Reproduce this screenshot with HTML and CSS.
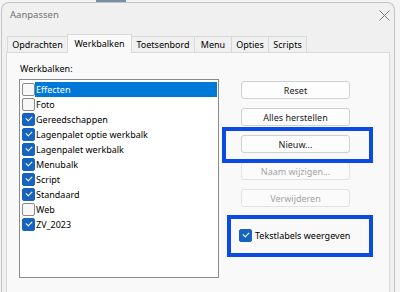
FILE: index.html
```html
<!DOCTYPE html>
<html>
<head>
    <meta charset="UTF-8">
    <title>Aanpassen</title>
    <link rel="stylesheet" href="styles.css">
</head>
<body>
    <div class="strip"><span class="peek"></span></div>
    <div class="dialog">
        <div class="titlebar">
            <span class="title">Aanpassen</span>
            <svg class="close" width="11" height="11" viewBox="0 0 11 11">
                <path d="M0.5 0.5 L10.5 10.5 M10.5 0.5 L0.5 10.5" stroke="#7c7c7c" stroke-width="1" fill="none"/>
            </svg>
        </div>
        <div class="tabs">
            <div class="tab w1">Opdrachten</div>
            <div class="tab w2 active">Werkbalken</div>
            <div class="tab w3">Toetsenbord</div>
            <div class="tab w4">Menu</div>
            <div class="tab w5">Opties</div>
            <div class="tab w6">Scripts</div>
        </div>
        <div class="panel">
            <div class="left">
                <div class="caption">Werkbalken:</div>
                <div class="list">
                    <div class="item"><span class="cb"></span><span class="text selected">Effecten</span></div>
                    <div class="item"><span class="cb"></span><span class="text">Foto</span></div>
                    <div class="item"><span class="cb on"></span><span class="text">Gereedschappen</span></div>
                    <div class="item"><span class="cb on"></span><span class="text">Lagenpalet optie werkbalk</span></div>
                    <div class="item"><span class="cb on"></span><span class="text">Lagenpalet werkbalk</span></div>
                    <div class="item"><span class="cb on"></span><span class="text">Menubalk</span></div>
                    <div class="item"><span class="cb on"></span><span class="text">Script</span></div>
                    <div class="item"><span class="cb on"></span><span class="text">Standaard</span></div>
                    <div class="item"><span class="cb"></span><span class="text">Web</span></div>
                    <div class="item"><span class="cb on"></span><span class="text">ZV_2023</span></div>
                </div>
            </div>
            <div class="right">
                <button class="btn">Reset</button>
                <button class="btn">Alles herstellen</button>
                <button class="btn">Nieuw...</button>
                <button class="btn" disabled>Naam wijzigen...</button>
                <button class="btn" disabled>Verwijderen</button>
                <label class="option"><span class="cb on"></span>Tekstlabels weergeven</label>
            </div>
        </div>
    </div>
    <div class="mark mark-new"></div>
    <div class="mark mark-labels"></div>
</body>
</html>
```

FILE: styles.css
```css
body {
    margin: 0;
    height: 292px;
    overflow: hidden;
    background-color: #f4f4f4;
    font-family: "Noto Sans", sans-serif;
    font-size: 9px;
    color: #000;
}

.strip {
    height: 2px;
    display: flex;
}

.peek {
    margin-left: 96px;
    width: 30px;
    background-color: #7890a4;
}

.dialog {
    margin-left: 1px;
    width: 394px;
    height: 290px;
    box-sizing: border-box;
    border: 1px solid #c4c4c4;
    border-bottom: none;
    border-radius: 8px 8px 0 0;
    background-color: #f0f0f0;
}

.titlebar {
    height: 31px;
    display: flex;
    align-items: flex-start;
}

.title {
    padding: 4px 0 0 8px;
    line-height: 16px;
    font-size: 9.5px;
    color: #707070;
}

.close {
    margin: 7px 4px 0 auto;
}

.tabs {
    height: 18px;
    display: flex;
    align-items: flex-end;
    padding-left: 5px;
}

.tab {
    height: 16px;
    box-sizing: border-box;
    margin-right: -1px;
    border: 1px solid #d9d9d9;
    border-bottom: none;
    background-color: #f0f0f0;
    text-align: center;
    line-height: 15px;
}

.tab.active {
    height: 19px;
    margin-bottom: -1px;
    position: relative;
    z-index: 1;
    background-color: #f9f9f9;
    line-height: 17px;
}

.w1 { width: 61px; }
.w2 { width: 65px; }
.w3 { width: 64px; }
.w4 { width: 38px; }
.w5 { width: 38px; }
.w6 { width: 39px; }

.panel {
    margin: 0 4px;
    height: 240px;
    box-sizing: border-box;
    border: 1px solid #d9d9d9;
    border-bottom: none;
    background-color: #f9f9f9;
    display: flex;
    padding: 8px 0 0 12px;
}

.caption {
    padding-left: 1px;
    line-height: 16px;
    margin-bottom: 2px;
}

.list {
    width: 200px;
    height: 199px;
    box-sizing: border-box;
    border: 1px solid #868a91;
    background-color: #fff;
    padding: 2px 1px 0 2px;
}

.item {
    height: 15px;
    display: flex;
    align-items: center;
}

.text {
    flex: 1;
    padding-left: 1px;
    line-height: 15px;
}

.text.selected {
    background-color: #0078d7;
    color: #fff;
}

.cb {
    width: 13px;
    height: 13px;
    box-sizing: border-box;
    border: 1px solid #8a8a8a;
    border-radius: 2px;
    background-color: #f7f7f7;
    position: relative;
}

.cb.on {
    border-color: #1764c0;
    background-color: #1764c0;
}

.cb.on::after {
    content: "";
    position: absolute;
    left: 3px;
    top: 2px;
    width: 5px;
    height: 3px;
    border-left: 1px solid #fff;
    border-bottom: 1px solid #fff;
    transform: rotate(-45deg);
}

.right {
    margin-left: 22px;
    padding-top: 20px;
    display: flex;
    flex-direction: column;
    align-items: flex-start;
}

.btn {
    width: 109px;
    height: 18px;
    margin-bottom: 9px;
    padding: 0;
    border: 1px solid #d0d0d0;
    border-radius: 3px;
    background-color: #fdfdfd;
    font-family: inherit;
    font-size: inherit;
    color: #1b1b1b;
}

.btn:disabled {
    color: #a3a3a3;
    border-color: #e2e2e2;
    background-color: #fbfbfb;
}

.option {
    margin: 12px 0 0 -2px;
    height: 15px;
    display: flex;
    align-items: center;
    gap: 3px;
}

.mark {
    position: absolute;
    box-sizing: border-box;
    border: 4px solid #0a4be3;
}

.mark-new {
    left: 222px;
    top: 127px;
    width: 151px;
    height: 36px;
}

.mark-labels {
    left: 227px;
    top: 215px;
    width: 146px;
    height: 42px;
}
```
